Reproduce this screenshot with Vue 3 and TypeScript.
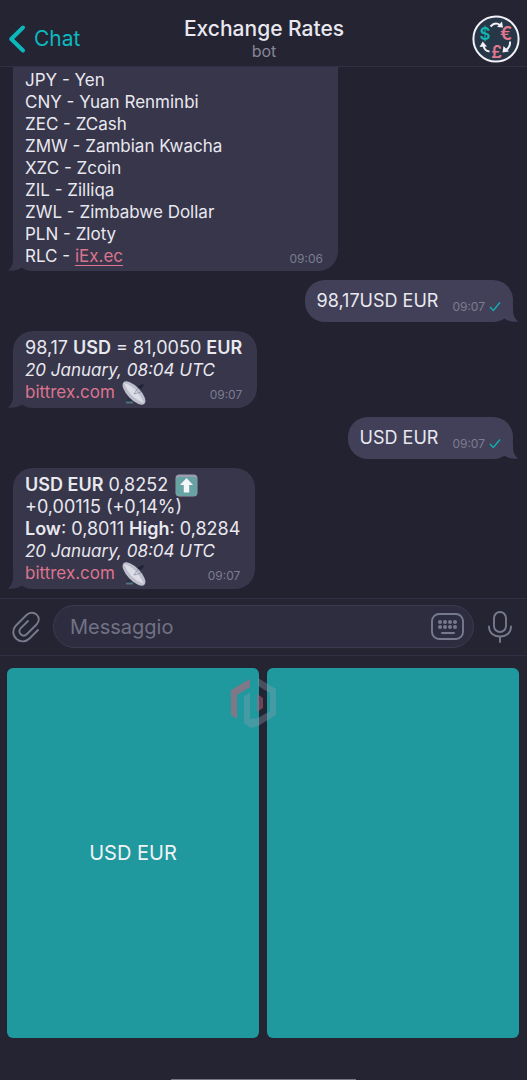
<script setup lang="ts">
import { ref } from 'vue'

interface Currency {
  code: string
  name: string
  link?: boolean
}

const currencies: Currency[] = [
  { code: 'JPY', name: 'Yen' },
  { code: 'CNY', name: 'Yuan Renminbi' },
  { code: 'ZEC', name: 'ZCash' },
  { code: 'ZMW', name: 'Zambian Kwacha' },
  { code: 'XZC', name: 'Zcoin' },
  { code: 'ZIL', name: 'Zilliqa' },
  { code: 'ZWL', name: 'Zimbabwe Dollar' },
  { code: 'PLN', name: 'Zloty' },
  { code: 'RLC', name: 'iEx.ec', link: true },
]

interface Message {
  id: number
  kind: 'list' | 'out' | 'convert' | 'quote'
  text?: string
  time: string
}

const messages: Message[] = [
  { id: 1, kind: 'list', time: '09:06' },
  { id: 2, kind: 'out', text: '98,17USD EUR', time: '09:07' },
  { id: 3, kind: 'convert', time: '09:07' },
  { id: 4, kind: 'out', text: 'USD EUR', time: '09:07' },
  { id: 5, kind: 'quote', time: '09:07' },
]

const draft = ref('')
</script>

<template>
  <div class="screen">
    <header class="top">
      <button class="back" type="button">
        <svg width="18" height="30" viewBox="0 0 18 30" aria-hidden="true">
          <path d="M15 3.500 3.200 15 15 26.500" fill="none" stroke="#0bb9bd" stroke-width="4" stroke-linecap="round" stroke-linejoin="round" />
        </svg>
        <span>Chat</span>
      </button>
      <div class="heading">
        <h1>Exchange Rates</h1>
        <p>bot</p>
      </div>
      <button class="avatar" type="button" aria-label="Bot profile">
        <svg width="48" height="48" viewBox="0 0 48 48">
          <circle cx="24" cy="24" r="22.600" fill="#273747" stroke="#f1f0f6" stroke-width="2" />
          <g fill="none" stroke="#f1f0f6" stroke-width="2">
            <path d="M18.500 11.500Q23 6.500 28 10" />
            <path d="M38 26.500Q38.500 32 34 35" />
            <path d="M17.500 36.500Q12 36 11.500 30" />
          </g>
          <g fill="#f1f0f6">
            <path d="M30 6.500 31 12.500 25 12z" />
            <path d="M31.500 31 30.500 37.500 37 36.500z" />
            <path d="M7.500 32 10.700 26.500 15 31.500z" />
          </g>
          <g font-family="Inter, sans-serif" font-weight="600" text-anchor="middle">
            <text x="13" y="25" font-size="17" fill="#11b5b2">$</text>
            <text x="34" y="25" font-size="18" fill="#e27790">€</text>
            <text x="24.500" y="43" font-size="17" fill="#e27790">£</text>
          </g>
        </svg>
      </button>
    </header>

    <main class="chat">
      <article
        v-for="m in messages"
        :key="m.id"
        class="bubble"
        :class="m.kind"
      >
        <template v-if="m.kind === 'list'">
          <div v-for="c in currencies" :key="c.code" class="line">
            <span>{{ c.code }} - <a v-if="c.link" class="underlined" href="#">{{ c.name }}</a><template v-else>{{ c.name }}</template></span>
            <time v-if="c.link">{{ m.time }}</time>
          </div>
        </template>

        <template v-else-if="m.kind === 'out'">
          <span>{{ m.text }}</span>
          <span class="status">
            <time>{{ m.time }}</time>
            <svg width="12" height="11" viewBox="0 0 12 11" aria-label="Sent">
              <path d="M1 6 4.300 9.500 11 1.500" fill="none" stroke="#12aeb0" stroke-width="1.400" />
            </svg>
          </span>
        </template>

        <template v-else>
          <div v-if="m.kind === 'convert'" class="line figures">
            <span>98,17 <b>USD</b> = 81,0050 <b>EUR</b></span>
          </div>
          <template v-else>
            <div class="line figures">
              <span><b>USD EUR</b> 0,8252</span>
              <svg class="emoji" width="23" height="23" viewBox="0 0 23 23" role="img" aria-label="Up">
                <rect x="0.500" y="0.500" width="22" height="22" rx="4" fill="#9a9caf" />
                <rect x="1" y="3" width="21" height="19" rx="3" fill="#68a3a4" />
                <path d="M11.500 4 18 11h-3.800v7.500H8.800V11H5z" fill="#f6f6fa" />
              </svg>
            </div>
            <div class="line figures">+0,00115 (+0,14%)</div>
            <div class="line figures"><span><b>Low</b>: 0,8011 <b>High</b>: 0,8284</span></div>
          </template>
          <div class="line"><em>20 January, 08:04 UTC</em></div>
          <div class="line">
            <a href="#">bittrex.com</a>
            <svg class="emoji" width="24" height="24" viewBox="0 0 24 24" role="img" aria-label="Satellite antenna">
              <path d="M4 11 12 19v2H4l2-4z" fill="#2b3245" />
              <path d="M4 21.500h7" stroke="#51717d" stroke-width="2" />
              <path d="M14 9 20 4" stroke="#202334" stroke-width="1.500" />
              <path d="M16 5.500 21 3l1 1-3 4z" fill="#202334" />
              <ellipse cx="12" cy="12" rx="15" ry="6.500" transform="rotate(46 12 12)" fill="#bcbecb" />
              <path d="M2 2Q14 5 22 22Q8 17 2 2" fill="#dcdde6" />
              <path d="M12 13 16 7M12 13 19 11" stroke="#878b9b" stroke-width="0.700" />
            </svg>
            <time>{{ m.time }}</time>
          </div>
        </template>

        <svg class="tail" width="17" height="17" viewBox="0 0 17 17" aria-hidden="true">
          <path d="M5 0V6Q5 12 0 16.700Q8 17.500 14 13.500L17 4z" fill="currentColor" />
        </svg>
      </article>
    </main>

    <form class="composer" @submit.prevent>
      <button type="button" aria-label="Attach file">
        <svg width="28" height="32" viewBox="0 0 28 32" fill="none" stroke="#777a8c" stroke-width="1.900" stroke-linecap="round">
          <path d="M26 19 17.500 27.500C14 31 8.500 31.500 4.500 28C0 24 .5 18 4 14.500L14.500 4C17.500 1 22 1 24.700 3.700C27.500 6.500 27.500 10.500 24.500 13.500L15 23C13 25 10.500 25 8.700 23.300C6.800 21.500 7 19 8.800 17.200L16 10" />
        </svg>
      </button>
      <div class="field">
        <input v-model="draft" type="text" placeholder="Messaggio" aria-label="Messaggio" />
        <button type="button" aria-label="Bot keyboard">
          <svg width="33" height="27" viewBox="0 0 33 27">
            <rect x="1" y="1" width="31" height="25" rx="7" fill="none" stroke="#777a8c" stroke-width="1.900" />
            <g fill="#777a8c">
              <circle v-for="n in 8" :key="n" :cx="9 + ((n - 1) % 4) * 5" :cy="n > 4 ? 14 : 9" r="2" />
            </g>
            <path d="M11 20h12" stroke="#777a8c" stroke-width="2" stroke-linecap="round" />
          </svg>
        </button>
      </div>
      <button type="button" aria-label="Record voice message">
        <svg width="26" height="34" viewBox="0 0 26 34" fill="none" stroke="#777a8c" stroke-width="1.900" stroke-linecap="round">
          <rect x="7" y="2" width="12" height="20" rx="6" />
          <path d="M2 16.500C2 23 7 26.500 13 26.500S24 23 24 16.500M13 26.500V32" />
        </svg>
      </button>
    </form>

    <section class="keyboard">
      <button class="key" type="button">USD EUR</button>
      <button class="key" type="button" aria-label="Empty key"></button>
      <svg class="mark" width="48" height="52" viewBox="0 0 48 52" aria-hidden="true">
        <path d="M20 1V9L7 17V41L1 37V12z" fill="#b6657d" opacity="0.650" />
        <path d="M28 0 46 11V37L28 48L21 50L14 45V18L20 15V41L28 40L40 33V15L28 8z" fill="#8a9caf" opacity="0.360" />
        <path d="M27 16 33 20V30L27 34z" fill="#b6657d" opacity="0.500" />
      </svg>
    </section>
    <div class="home"></div>
  </div>
</template>

<style>
body {
  margin: 0;
  background: #252433;
}
</style>

<style scoped>
.screen {
  display: flex;
  flex-direction: column;
  min-height: 100vh;
  background: #252433;
  color: #e9e8ef;
  font-family: Inter, "Liberation Sans", sans-serif;
  font-size: 17px;
  line-height: 22px;
}
button {
  padding: 0;
  border: 0;
  background: none;
  color: inherit;
  font: inherit;
  cursor: pointer;
}
svg {
  display: block;
  flex: none;
}
.top {
  display: grid;
  grid-template-columns: 1fr auto 1fr;
  align-items: end;
  padding: 15px 7px 3px 8px;
  border-bottom: 1px solid #302f43;
}
.back {
  display: flex;
  align-items: center;
  justify-self: start;
  gap: 8px;
  height: 48px;
  color: #0bb9bd;
  font-size: 21px;
}
.heading {
  text-align: center;
  padding-bottom: 2px;
}
h1 {
  margin: 0;
  font-size: 21px;
  line-height: 24px;
  font-weight: 500;
}
.heading p {
  margin: 0;
  font-size: 16px;
  line-height: 20px;
  color: #858698;
}
.avatar {
  justify-self: end;
}
.chat {
  display: flex;
  flex-direction: column;
  align-items: flex-start;
  gap: 9px;
  padding: 0 14px 9px 13px;
  background: #232230;
}
.bubble {
  position: relative;
  box-sizing: border-box;
  padding: 6px 15px 5px 12px;
  border-radius: 20px;
  background: #37364b;
  color: #37364b;
}
.bubble > :not(.tail) {
  color: #e9e8ef;
}
.list {
  width: 65%;
  padding-top: 2px;
  padding-bottom: 4px;
  border-top-left-radius: 0;
  border-top-right-radius: 0;
}
.figures,
.out {
  font-size: 18px;
}
.out {
  display: flex;
  align-self: flex-end;
  gap: 14px;
  padding: 10px 12px 10px 12px;
  background: #424059;
  color: #424059;
}
.line {
  display: flex;
  height: 22px;
  white-space: nowrap;
}
.emoji {
  margin-left: 7px;
}
a {
  color: #dc748d;
  text-decoration: none;
}
.underlined {
  text-decoration: underline;
  text-underline-offset: 3px;
}
b {
  font-weight: 600;
}
time {
  margin-left: auto;
  padding-top: 6px;
  font-size: 12px;
  line-height: 16px;
  color: #7d7c8f;
}
.status {
  display: flex;
  align-items: flex-end;
  gap: 4px;
}
.status time {
  padding-top: 0;
  margin-bottom: -3px;
}
.tail {
  position: absolute;
  bottom: 0;
  left: -5px;
}
.out .tail {
  right: -5px;
  left: auto;
  transform: scaleX(-1);
}
.composer {
  display: flex;
  align-items: center;
  gap: 13px;
  padding: 6px 14px 7px 12px;
  border-top: 1px solid #302f43;
  border-bottom: 1px solid #302f43;
}
.field {
  display: flex;
  flex: 1;
  align-items: center;
  padding: 0 9px 0 16px;
  border: 1px solid #3b3a50;
  border-radius: 22px;
  background: #2e2d40;
}
.field input {
  flex: 1;
  min-width: 0;
  height: 41px;
  padding: 0;
  border: 0;
  outline: 0;
  background: none;
  color: #e9e8ef;
  font: inherit;
  font-size: 20px;
}
.field input::placeholder {
  color: #717284;
  opacity: 1;
}
.keyboard {
  position: relative;
  display: grid;
  flex: 1;
  grid-template-columns: 1fr 1fr;
  gap: 8px;
  padding: 12px 8px 41px 7px;
}
.key {
  border-radius: 6px;
  background: #1f999e;
  color: #f0f3f6;
  font-size: 20px;
}
.mark {
  position: absolute;
  top: 22px;
  left: calc(50% - 34px);
}
.home {
  width: 35%;
  height: 1px;
  margin: 0 auto;
  background: #777785;
}
</style>
